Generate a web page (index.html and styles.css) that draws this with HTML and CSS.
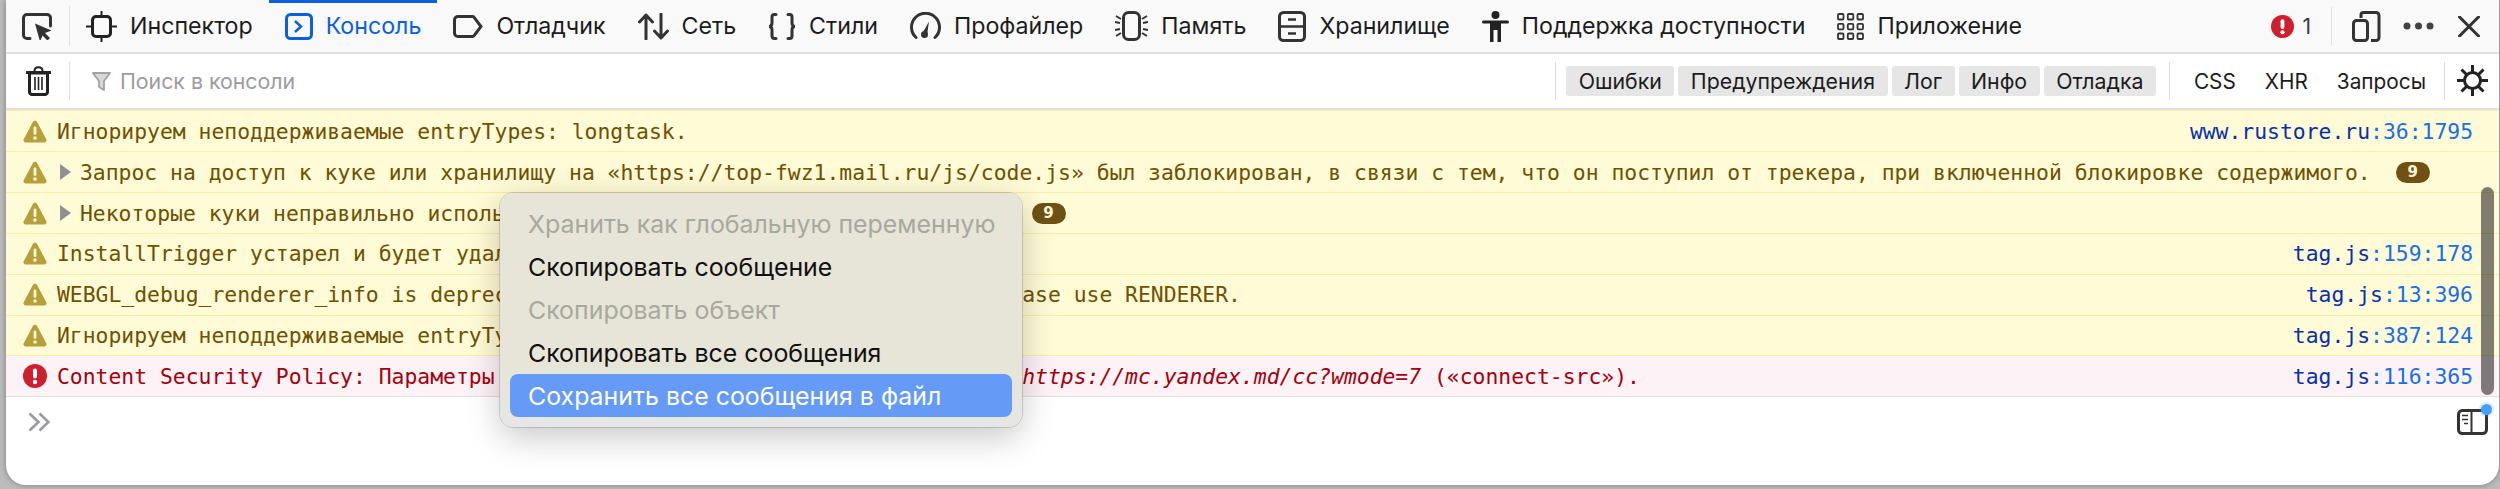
FILE: index.html
```html
<!DOCTYPE html>
<html lang="ru">
<head>
<meta charset="utf-8">
<title>Консоль</title>
<link rel="stylesheet" href="styles.css">
</head>
<body>
<svg class="defs" width="0" height="0" aria-hidden="true">
  <symbol id="warn" viewBox="0 0 24 23">
    <path d="M12 0.8c.9 0 1.7.5 2.1 1.3l9.2 17.2c.8 1.6-.3 3.2-2.1 3.2H2.8C1 22.5-.1 20.9.7 19.3L9.9 2.100C10.300 1.300 11.100.8 12 .8z" fill="#b79f3b"/>
    <rect x="10.600" y="6.500" width="2.800" height="8.500" rx="1.400" fill="#fffbd6"/>
    <circle cx="12" cy="18" r="1.800" fill="#fffbd6"/>
  </symbol>
  <symbol id="err" viewBox="0 0 24 24">
    <circle cx="12" cy="12" r="12" fill="#cd1f2d"/>
    <rect x="10" y="4.500" width="4" height="10" rx="2" fill="#fff"/>
    <circle cx="12" cy="18" r="2.200" fill="#fff"/>
  </symbol>
  <symbol id="caret" viewBox="0 0 11 16">
    <path d="M0 0l11 8-11 8z" fill="#8f8f94"/>
  </symbol>
</svg>
<div class="window">
  <header class="toolbar">
    <div class="picker">
      <svg class="ico" width="30" height="27" viewBox="0 0 30 27"><path d="M8 25.500H5a3.500 3.500 0 0 1-3.500-3.500V5A3.500 3.500 0 0 1 5 1.500h20A3.500 3.500 0 0 1 28.500 5v8" fill="none" stroke="#333" stroke-width="3" stroke-linecap="round"/><path d="M13 10.500l16.500 7-6.500 2.500 5 5-2.500 2.500-5-5-2.500 6z" fill="#333"/></svg>
    </div>
    <nav class="tabs">
      <div class="tab">
        <svg class="ico" width="31" height="31" viewBox="0 0 31 31"><rect x="6.500" y="5.500" width="18" height="20" rx="3.500" fill="none" stroke="#222" stroke-width="3"/><path d="M0 15.500h5M26 15.500h5M15.500 0v4M15.500 27v4" stroke="#222" stroke-width="2"/></svg>
        <span>Инспектор</span>
      </div>
      <div class="tab active">
        <svg class="ico" width="28" height="27" viewBox="0 0 28 27"><rect x="1.500" y="1.500" width="25" height="24" rx="4" fill="none" stroke="#0b60e0" stroke-width="3"/><path d="M10 8l6 5.500-6 5.500" fill="none" stroke="#0b60e0" stroke-width="2.500"/></svg>
        <span>Консоль</span>
      </div>
      <div class="tab">
        <svg class="ico" width="30" height="23" viewBox="0 0 30 23"><path d="M5 1.500h14.500a2 2 0 0 1 1.600.8l6.900 9.200-6.900 9.200a2 2 0 0 1-1.600.8H5a3.500 3.500 0 0 1-3.500-3.500V5A3.500 3.500 0 0 1 5 1.500z" fill="none" stroke="#333" stroke-width="3"/></svg>
        <span>Отладчик</span>
      </div>
      <div class="tab">
        <svg class="ico" width="31" height="27" viewBox="0 0 31 27"><path d="M8 26V2M1.500 9L8 2l6.500 7M23 1v24M16.500 18l6.500 7 6.500-7" fill="none" stroke="#333" stroke-width="3" stroke-linecap="round" stroke-linejoin="round"/></svg>
        <span>Сеть</span>
      </div>
      <div class="tab">
        <svg class="ico" width="28" height="27" viewBox="0 0 28 27"><path d="M8 1.500H6.500a2.500 2.500 0 0 0-2.500 2.500v6c0 2-1 3.500-3 3.500 2 0 3 1.500 3 3.500v6a2.500 2.500 0 0 0 2.500 2.500H8M20 1.500h1.500A2.500 2.500 0 0 1 24 4v6c0 2 1 3.500 3 3.500-2 0-3 1.500-3 3.500v6a2.500 2.500 0 0 1-2.500 2.500H20" fill="none" stroke="#333" stroke-width="3" stroke-linecap="round"/></svg>
        <span>Стили</span>
      </div>
      <div class="tab">
        <svg class="ico" width="31" height="28" viewBox="0 0 31 28"><path d="M6 25.500A14 14 0 1 1 25 25.500" fill="none" stroke="#333" stroke-width="3" stroke-linecap="round"/><path d="M12 22l7-12.500-2 14z" fill="#333"/><circle cx="14.500" cy="22.500" r="3.500" fill="#333"/></svg>
        <span>Профайлер</span>
      </div>
      <div class="tab">
        <svg class="ico" width="33" height="30" viewBox="0 0 33 30"><rect x="8.500" y="1.500" width="16" height="27" rx="5" fill="none" stroke="#333" stroke-width="3"/><path d="M1 5l5 3M0 11l5 1M0 19l5-1M1 25l5-3M32 5l-5 3M33 11l-5 1M33 19l-5-1M32 25l-5-3" stroke="#333" stroke-width="2"/></svg>
        <span>Память</span>
      </div>
      <div class="tab">
        <svg class="ico" width="28" height="31" viewBox="0 0 28 31"><rect x="1.500" y="1.500" width="25" height="28" rx="4" fill="none" stroke="#333" stroke-width="3"/><path d="M2 15.500h24M10 8.500h8M10 22.500h8" stroke="#333" stroke-width="2.500"/></svg>
        <span>Хранилище</span>
      </div>
      <div class="tab">
        <svg class="ico" width="27" height="31" viewBox="0 0 27 31"><circle cx="13.500" cy="4" r="4" fill="#222"/><path d="M1.500 11h24" stroke="#222" stroke-width="3" stroke-linecap="round"/><path d="M8 11h11v20h-3.500V19h-4v12H8z" fill="#222"/></svg>
        <span>Поддержка доступности</span>
      </div>
      <div class="tab">
        <svg class="ico" width="27" height="27" viewBox="0 0 27 27"><g fill="none" stroke="#333" stroke-width="1.800"><rect x="1" y="1" width="5.500" height="5.500" rx="1"/><rect x="10.800" y="1" width="5.500" height="5.500" rx="1"/><rect x="20.500" y="1" width="5.500" height="5.500" rx="1"/><rect x="1" y="10.800" width="5.500" height="5.500" rx="1"/><rect x="10.800" y="10.800" width="5.500" height="5.500" rx="1"/><rect x="20.500" y="10.800" width="5.500" height="5.500" rx="1"/><rect x="1" y="20.500" width="5.500" height="5.500" rx="1"/><rect x="10.800" y="20.500" width="5.500" height="5.500" rx="1"/><rect x="20.500" y="20.500" width="5.500" height="5.500" rx="1"/></g></svg>
        <span>Приложение</span>
      </div>
    </nav>
    <div class="tools">
      <svg class="ico err-ico" width="23" height="23"><use href="#err"/></svg>
      <span class="err-count">1</span>
      <i class="sep tools-sep"></i>
      <svg class="ico device" width="29" height="31" viewBox="0 0 29 31"><path d="M9 7V4a2.500 2.500 0 0 1 2.500-2.500H24A3 3 0 0 1 27 4.500v22a3 3 0 0 1-3 3h-5" fill="none" stroke="#333" stroke-width="3"/><rect x="1.500" y="9.500" width="14" height="20" rx="3" fill="none" stroke="#333" stroke-width="3"/></svg>
      <svg class="ico dots" width="31" height="8" viewBox="0 0 31 8"><circle cx="4" cy="4" r="3.500" fill="#444"/><circle cx="15.500" cy="4" r="3.500" fill="#444"/><circle cx="27" cy="4" r="3.500" fill="#444"/></svg>
      <svg class="ico close" width="22" height="21" viewBox="0 0 22 21"><path d="M1.500 1l19 19M20.500 1l-19 19" stroke="#333" stroke-width="3" stroke-linecap="round"/></svg>
    </div>
  </header>

  <div class="filterbar">
    <div class="trash">
      <svg class="ico" width="25" height="30" viewBox="0 0 25 30"><path d="M1 6.500h23" stroke="#222" stroke-width="3" stroke-linecap="round"/><path d="M8.500 5c0-5 8-5 8 0" fill="none" stroke="#222" stroke-width="2"/><path d="M3.500 7h18v19a2.500 2.500 0 0 1-2.500 2.500H6A2.500 2.500 0 0 1 3.500 26z" fill="none" stroke="#222" stroke-width="3"/><path d="M9 11v13M12.500 11v13M16 11v13" stroke="#222" stroke-width="1.600"/></svg>
    </div>
    <div class="search">
      <svg class="ico" width="19" height="19" viewBox="0 0 19 19"><path d="M1 1h17l-6 8v9l-5-3V9z" fill="#d9d9d9" stroke="#a3a3a3" stroke-width="1.800" stroke-linejoin="round"/></svg>
      <span>Поиск в консоли</span>
    </div>
    <div class="filters">
      <button class="chip">Ошибки</button>
      <button class="chip">Предупреждения</button>
      <button class="chip">Лог</button>
      <button class="chip">Инфо</button>
      <button class="chip">Отладка</button>
    </div>
    <div class="plain">
      <button class="flat">CSS</button>
      <button class="flat">XHR</button>
      <button class="flat">Запросы</button>
    </div>
    <div class="gear">
      <svg class="ico" width="31" height="31" viewBox="0 0 31 31"><circle cx="15.500" cy="15.500" r="8" fill="none" stroke="#222" stroke-width="3"/><path d="M15.500 0v7M15.500 24v7M0 15.500h7M24 15.500h7M4.500 4.500l5 5M21.500 21.500l5 5M26.500 4.500l-5 5M9.500 21.500l-5 5" stroke="#222" stroke-width="3"/></svg>
    </div>
  </div>

  <main class="output">
    <div class="row warn first">
      <svg class="sev" width="24" height="23"><use href="#warn"/></svg>
      <span class="msg">Игнорируем неподдерживаемые entryTypes: longtask.</span>
      <a class="src">www.rustore.ru<b>:36:1795</b></a>
    </div>
    <div class="row warn">
      <svg class="sev" width="24" height="23"><use href="#warn"/></svg>
      <svg class="caret" width="11" height="16"><use href="#caret"/></svg>
      <span class="msg">Запрос на доступ к куке или хранилищу на «https://top-fwz1.mail.ru/js/code.js» был заблокирован, в связи с тем, что он поступил от трекера, при включенной блокировке содержимого.</span>
      <span class="badge">9</span>
    </div>
    <div class="row warn">
      <svg class="sev" width="24" height="23"><use href="#warn"/></svg>
      <svg class="caret" width="11" height="16"><use href="#caret"/></svg>
      <span class="msg">Некоторые куки неправильно используют рекомендованный атрибут «SameSite»</span>
      <span class="badge">9</span>
    </div>
    <div class="row warn">
      <svg class="sev" width="24" height="23"><use href="#warn"/></svg>
      <span class="msg">InstallTrigger устарел и будет удалён в будущем.</span>
      <a class="src">tag.js<b>:159:178</b></a>
    </div>
    <div class="row warn">
      <svg class="sev" width="24" height="23"><use href="#warn"/></svg>
      <span class="msg">WEBGL_debug_renderer_info is deprecated in Firefox and will be removed. Please use RENDERER.</span>
      <a class="src">tag.js<b>:13:396</b></a>
    </div>
    <div class="row warn">
      <svg class="sev" width="24" height="23"><use href="#warn"/></svg>
      <span class="msg">Игнорируем неподдерживаемые entryTypes: longtask.</span>
      <a class="src">tag.js<b>:387:124</b></a>
    </div>
    <div class="row error">
      <svg class="sev" width="24" height="24"><use href="#err"/></svg>
      <span class="msg">Content Security Policy: Параметры страницы заблокировали загрузку ресурса <em>https://mc.yandex.md/cc?wmode=7</em> («connect-src»).</span>
      <a class="src">tag.js<b>:116:365</b></a>
    </div>
    <div class="prompt">
      <svg class="ico" width="22" height="20" viewBox="0 0 22 20"><path d="M1.500 1.500l9 8.500-9 8.500M11.500 1.500l9 8.500-9 8.500" fill="none" stroke="#9a9a9e" stroke-width="2.600"/></svg>
      <div class="book">
        <svg class="ico" width="31" height="26" viewBox="0 0 31 26"><rect x="1.500" y="1.500" width="28" height="23" rx="4" fill="#fff" stroke="#333" stroke-width="3"/><path d="M14.500 2v22" stroke="#333" stroke-width="2"/><path d="M5 6.500h6M5 10.500h6M7 14.500h4" stroke="#333" stroke-width="1.500"/></svg>
        <i class="dot"></i>
      </div>
    </div>
  </main>

  <div class="scrollthumb"></div>

  <ul class="menu">
    <li class="off">Хранить как глобальную переменную</li>
    <li>Скопировать сообщение</li>
    <li class="off">Скопировать объект</li>
    <li>Скопировать все сообщения</li>
    <li class="hot">Сохранить все сообщения в файл</li>
  </ul>
</div>
</body>
</html>
```
FILE: styles.css
```css
* { box-sizing: border-box; }
html, body { margin: 0; height: 489px; overflow: hidden; }
body {
  background: #bcbcbc;
  padding: 0 1px 4px 6px;
  font-family: Inter, "Liberation Sans", sans-serif;
  color: #1c1c20;
}
.defs { position: absolute; }
.ico { display: block; flex: none; }
.window {
  position: relative;
  height: 485px;
  background: #fff;
  border-radius: 0 0 20px 20px;
  overflow: hidden;
  display: flex;
  flex-direction: column;
  box-shadow: 0 0 6px rgba(0,0,0,.35);
}

/* top toolbar */
.toolbar {
  height: 54px;
  flex: none;
  display: flex;
  align-items: stretch;
  background: #f9f9fa;
  border-bottom: 2px solid #e0e0e2;
}
.picker {
  width: 64px;
  padding-left: 16px;
  display: flex;
  align-items: center;
  position: relative;
}
.picker::after, .trash::after {
  content: "";
  position: absolute;
  right: 0;
  width: 1px;
  background: #e0e0e2;
}
.picker::after { top: 6px; bottom: 6px; }
.tabs { display: flex; align-items: stretch; }
.tab {
  position: relative;
  display: flex;
  align-items: center;
  gap: 13px;
  padding: 0 16px;
  font-size: 23.200px;
  white-space: nowrap;
}
.tab.active { color: #0b60e0; }
.tab.active::before {
  content: "";
  position: absolute;
  left: 0;
  right: 0;
  top: 0;
  height: 3px;
  background: #0b60e0;
}
.tools {
  margin-left: auto;
  display: flex;
  align-items: center;
  padding-right: 19px;
}
.err-count { font-size: 21px; margin-left: 8px; color: #3a3a3e; }
.sep { display: block; width: 1px; background: #e0e0e2; }
.tools-sep { height: 38px; margin: 0 20px 0 20px; }
.dots { margin-left: 22px; }
.close { margin-left: 24px; }

/* filter bar */
.filterbar {
  height: 56px;
  flex: none;
  display: flex;
  align-items: center;
  background: #fff;
  border-bottom: 2px solid #e0e0e2;
}
.trash {
  position: relative;
  width: 64px;
  height: 38px;
  padding-left: 20px;
  display: flex;
  align-items: center;
}
.trash::after { top: 0; bottom: 0; }
.search {
  flex: 1;
  display: flex;
  align-items: center;
  gap: 9px;
  padding-left: 22px;
  font-size: 21.300px;
  color: #9c9c9e;
}
.filters, .plain {
  height: 38px;
  display: flex;
  align-items: center;
  border-left: 1px solid #e0e0e2;
}
.filters { gap: 4px; padding: 0 13px 0 10px; }
.chip, .flat {
  border: 0;
  margin: 0;
  font: inherit;
  font-size: 20.800px;
  color: #1c1c20;
  white-space: nowrap;
}
.chip {
  height: 30px;
  padding: 0 12.500px;
  border-radius: 3px;
  background: #e6e6e6;
  font-size: 21.300px;
}
.plain { gap: 29px; padding: 0 18px 0 24px; }
.flat { background: none; padding: 0; }
.gear {
  height: 38px;
  padding: 3px 11px 0 12px;
  border-left: 1px solid #e0e0e2;
}

/* output */
.output { flex: 1; display: flex; flex-direction: column; min-height: 0; }
.row {
  height: 40.800px;
  flex: none;
  display: flex;
  align-items: center;
  padding: 0 26px 0 17px;
  border-bottom: 1.600px solid;
  font: 21.380px "DejaVu Sans Mono", "Liberation Mono", monospace;
  white-space: nowrap;
  overflow: hidden;
}
.row.warn { background: #fffbd6; border-color: #f9edaa; color: #6f5100; }
.row.first { height: 42.400px; border-top: 1.600px solid #f9edaa; }
.row.error { background: #fdf2f5; border-color: #e0dfe1; color: #a4000f; }
.sev { flex: none; margin-right: 10px; }
.caret { flex: none; margin: 0 9px 0 3px; }
.msg em { font-style: italic; }
.src { margin-left: auto; color: #0a30a6; }
.src b { font-weight: 400; color: #1a6fe6; }
.badge {
  flex: none;
  width: 34px;
  height: 21px;
  margin-left: 25px;
  border-radius: 10.500px;
  background: #6f5113;
  color: #fffbd6;
  font: 700 15px/21px "DejaVu Sans", sans-serif;
  text-align: center;
}
.prompt {
  flex: 1;
  position: relative;
  display: flex;
  justify-content: space-between;
  align-items: flex-start;
  padding: 15px 11px 0 22px;
}
.book { position: relative; margin-top: -3px; }
.dot {
  position: absolute;
  right: -4px;
  top: -5px;
  width: 11px;
  height: 11px;
  border-radius: 50%;
  background: #45a1ff;
  box-shadow: 0 0 0 2px rgba(69,161,255,.2);
}

/* overlays */
.scrollthumb {
  position: absolute;
  left: 2475px;
  top: 187px;
  width: 13px;
  height: 208px;
  border-radius: 7px;
  background: rgba(0,0,0,.5);
}
.menu {
  position: absolute;
  left: 494px;
  top: 193px;
  width: 522px;
  height: 234px;
  margin: 0;
  padding: 9px 10px;
  list-style: none;
  border-radius: 14px;
  background: linear-gradient(#e6e5d7 0, #e6e5d8 74%, #e6e6e6 100%);
  box-shadow: 0 0 0 1px rgba(0,0,0,.14), 0 10px 34px rgba(0,0,0,.22);
  font-size: 24.900px;
}
.menu li {
  height: 43px;
  line-height: 45px;
  padding-left: 18px;
  color: #111;
  border-radius: 8px;
  white-space: nowrap;
}
.menu li.off { color: #a9a89f; }
.menu li.hot { background: #659bf6; color: #fff; }
```
